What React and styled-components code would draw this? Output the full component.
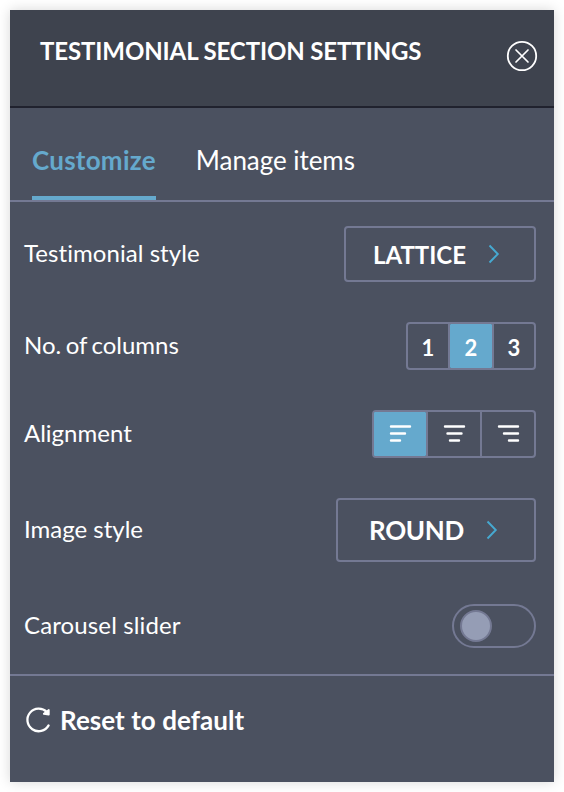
// Components==============
import React, { useState } from "react";
import styled, { createGlobalStyle, ThemeProvider } from "styled-components";
// =========================

const theme = {
  panel: "#4b5160",
  header: "#3e434e",
  headerLine: "#20222e",
  line: "#747993",
  accent: "#65a9cd",
  chevron: "#46a9d1",
  knob: "#959db5",
  white: "#ffffff",
};

const GlobalStyle = createGlobalStyle`
  * {
    box-sizing: border-box;
  }

  body {
    margin: 0;
    background: #ffffff;
    font-family: Lato, "Liberation Sans", sans-serif;
    font-variant-ligatures: none;
  }

  button {
    margin: 0;
    padding: 0;
    border: 0;
    background: none;
    color: inherit;
    font-family: inherit;
    font-variant-ligatures: inherit;
  }
`;

const Panel = styled.section`
  width: 544px;
  height: 772px;
  margin: 10px;
  background: ${({ theme: { panel } }) => panel};
  color: ${({ theme: { white } }) => white};
  box-shadow: 0 0 12px rgba(0, 0, 0, 0.16);
`;

const Header = styled.header`
  display: flex;
  justify-content: space-between;
  align-items: flex-start;
  height: 98px;
  padding: 26px 16px 0 30px;
  background: ${({ theme: { header } }) => header};
  border-bottom: 2px solid ${({ theme: { headerLine } }) => headerLine};
`;

const Title = styled.h1`
  margin: 0;
  font-size: 24px;
  font-weight: 700;
  letter-spacing: -0.11px;
  line-height: 30px;
  white-space: nowrap;
`;

const CloseButton = styled.button`
  width: 32px;
  height: 32px;
  margin-top: 4px;

  svg {
    display: block;
  }
`;

const Tabs = styled.nav`
  display: flex;
  align-items: stretch;
  gap: 40px;
  height: 94px;
  padding: 0 22px;
  border-bottom: 2px solid ${({ theme: { line } }) => line};
`;

const Tab = styled.button`
  padding-top: 16px;
  border-bottom: 4px solid
    ${({ $active, theme: { accent } }) => ($active ? accent : "transparent")};
  color: ${({ $active, theme: { accent, white } }) =>
    $active ? accent : white};
  font-size: 26px;
  font-weight: ${({ $active }) => ($active ? 700 : 400)};
  letter-spacing: ${({ $active }) => ($active ? 0.25 : -0.05)}px;
  line-height: 32px;
  white-space: nowrap;
`;

const Settings = styled.div`
  display: flex;
  flex-direction: column;
  gap: 40px;
  height: 474px;
  padding: 24px 18px 0 14px;
  border-bottom: 2px solid ${({ theme: { line } }) => line};
`;

const Row = styled.div`
  display: flex;
  justify-content: space-between;
  align-items: center;

  &:last-child {
    margin-top: 2px;
  }
`;

const Label = styled.span`
  padding-bottom: 2px;
  font-size: 24px;
  letter-spacing: ${({ $tracking = 0 }) => $tracking}px;
  line-height: 30px;
  word-spacing: ${({ $wordGap = 0 }) => $wordGap}px;
`;

const Picker = styled.button`
  display: flex;
  align-items: center;
  gap: 22px;
  width: ${({ $large }) => ($large ? 200 : 192)}px;
  height: ${({ $large }) => ($large ? 64 : 56)}px;
  padding-left: ${({ $large }) => ($large ? 31 : 27)}px;
  border: 2px solid ${({ theme: { line } }) => line};
  border-radius: 4px;
  font-size: ${({ $large }) => ($large ? 26 : 24)}px;
  font-weight: 700;
  line-height: 30px;
  letter-spacing: ${({ $large }) => ($large ? -0.3 : 0)}px;

  span {
    padding-top: ${({ $large }) => ($large ? 0 : 2)}px;
  }
`;

const Group = styled.div`
  display: flex;
  border: 2px solid ${({ theme: { line } }) => line};
  border-radius: 4px;
`;

const Segment = styled.button`
  display: flex;
  justify-content: center;
  align-items: center;
  width: ${({ $width }) => $width}px;
  height: 44px;
  background: ${({ $active, theme: { accent } }) =>
    $active ? accent : "transparent"};
  border-radius: 1px;
  font-size: 22px;
  font-weight: 700;
  line-height: 26px;

  span {
    padding-top: 4px;
  }
`;

const Divider = styled.i`
  width: 2px;
  background: ${({ theme: { line } }) => line};
`;

const Switch = styled.button`
  display: flex;
  align-items: center;
  justify-content: ${({ $on }) => ($on ? "flex-end" : "flex-start")};
  width: 84px;
  height: 44px;
  padding: 0 6px;
  border: 2px solid ${({ theme: { line } }) => line};
  border-radius: 22px;
`;

const Knob = styled.span`
  width: 32px;
  height: 32px;
  background: ${({ theme: { knob } }) => knob};
  border: 2px solid ${({ theme: { line } }) => line};
  border-radius: 50%;
`;

const ResetButton = styled.button`
  display: flex;
  align-items: center;
  gap: 8px;
  padding: 28px 0 0 14px;
  font-size: 26px;
  font-weight: 700;
  letter-spacing: 0.05px;
  line-height: 32px;

  svg {
    margin-bottom: 1px;
  }
`;

const CloseIcon = () => (
  <svg width="32" height="32" fill="none" stroke="#fff" strokeLinecap="round">
    <circle cx="16" cy="16" r="14.2" strokeWidth="1.8" />
    <path d="M10 10l12 12M22 10L10 22" strokeWidth="1.7" />
  </svg>
);

const Chevron = () => (
  <svg width="12" height="20" fill="none">
    <path d="M1.5 1.5l8.3 8.5-8.3 8.5" stroke={theme.chevron} strokeWidth="1.9" />
  </svg>
);

const alignPaths = {
  left: "M4 2.5h19M4 9.5h14M4 16.5h9",
  center: "M4 2.5h19M6.5 9.5h14M9 16.5h9",
  right: "M4 2.5h19M9 9.5h14M14 16.5h9",
};

const AlignIcon = ({ side }) => (
  <svg width="27" height="20" fill="none" stroke="#fff" strokeLinecap="round">
    <path d={alignPaths[side]} strokeWidth="2.4" />
  </svg>
);

const ResetIcon = () => (
  <svg width="28" height="28" fill="none">
    <path
      d="M24.6 19.4A11.3 11.3 0 1 1 22.8 6"
      stroke="#fff"
      strokeWidth="2.3"
      strokeLinecap="round"
    />
    <path
      d="M24.8 4v4.6l-5-.8z"
      fill="#fff"
      stroke="#fff"
      strokeWidth="1.8"
      strokeLinejoin="round"
    />
  </svg>
);

const tabs = ["Customize", "Manage items"];
const columnOptions = [
  { value: 1, width: 40 },
  { value: 2, width: 42 },
  { value: 3, width: 40 },
];
const sides = ["left", "center", "right"];

export default function App() {
  const [tab, setTab] = useState("Customize");
  const [columns, setColumns] = useState(2);
  const [align, setAlign] = useState("left");
  const [carousel, setCarousel] = useState(false);

  const reset = () => {
    setColumns(2);
    setAlign("left");
    setCarousel(false);
  };

  return (
    <ThemeProvider theme={theme}>
      <GlobalStyle />
      <Panel>
        <Header>
          <Title>TESTIMONIAL SECTION SETTINGS</Title>
          <CloseButton aria-label="Close">
            <CloseIcon />
          </CloseButton>
        </Header>
        <Tabs>
          {tabs.map((name) => (
            <Tab key={name} $active={name === tab} onClick={() => setTab(name)}>
              {name}
            </Tab>
          ))}
        </Tabs>
        <Settings>
          <Row>
            <Label $tracking={0.06}>Testimonial style</Label>
            <Picker>
              <span>LATTICE</span>
              <Chevron />
            </Picker>
          </Row>
          <Row>
            <Label $wordGap={-1.7}>No. of columns</Label>
            <Group>
              {columnOptions.map(({ value, width }, i) => (
                <React.Fragment key={value}>
                  {i > 0 && <Divider />}
                  <Segment
                    $width={width}
                    $active={value === columns}
                    onClick={() => setColumns(value)}
                  >
                    <span>{value}</span>
                  </Segment>
                </React.Fragment>
              ))}
            </Group>
          </Row>
          <Row>
            <Label>Alignment</Label>
            <Group>
              {sides.map((side, i) => (
                <React.Fragment key={side}>
                  {i > 0 && <Divider />}
                  <Segment
                    $width={52}
                    $active={side === align}
                    aria-label={`Align ${side}`}
                    onClick={() => setAlign(side)}
                  >
                    <AlignIcon side={side} />
                  </Segment>
                </React.Fragment>
              ))}
            </Group>
          </Row>
          <Row>
            <Label>Image style</Label>
            <Picker $large>
              <span>ROUND</span>
              <Chevron />
            </Picker>
          </Row>
          <Row>
            <Label $tracking={0.13}>Carousel slider</Label>
            <Switch
              $on={carousel}
              aria-label="Carousel slider"
              onClick={() => setCarousel(!carousel)}
            >
              <Knob />
            </Switch>
          </Row>
        </Settings>
        <ResetButton onClick={reset}>
          <ResetIcon />
          Reset to default
        </ResetButton>
      </Panel>
    </ThemeProvider>
  );
}
